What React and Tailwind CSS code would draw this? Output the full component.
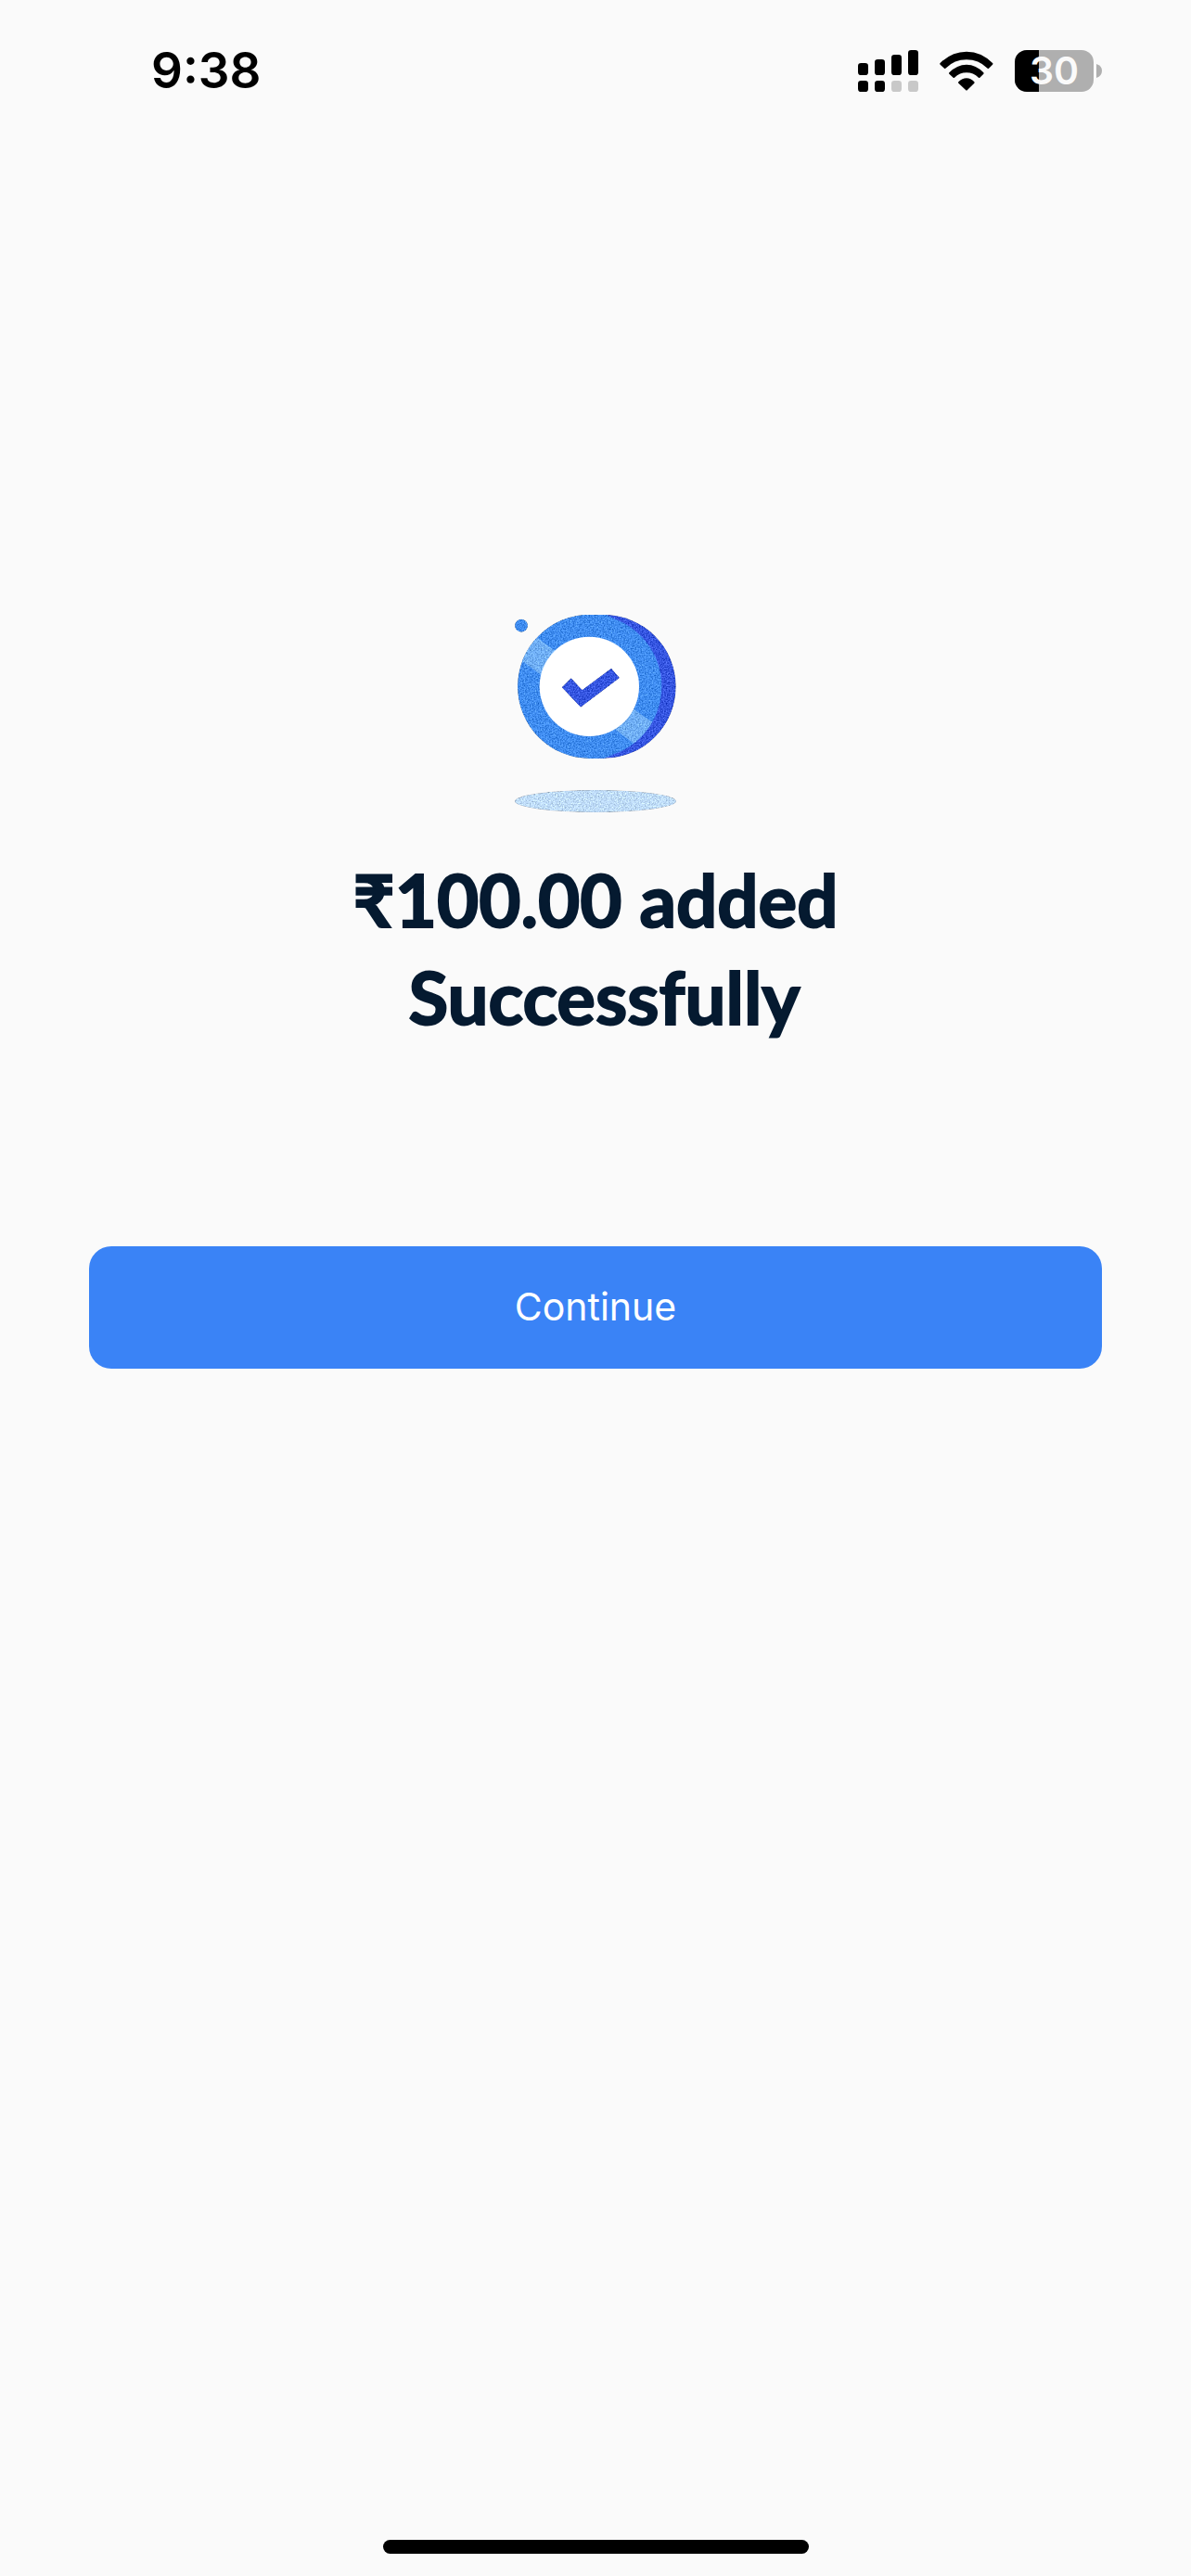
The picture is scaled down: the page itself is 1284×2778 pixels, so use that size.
function SignalIcon() {
  return (
    <svg className="h-[45px] w-[65px]" viewBox="75 69 195 135" aria-hidden="true">
      <rect x="75" y="111" width="33" height="39" rx="10" />
      <rect x="129" y="99" width="33" height="51" rx="10" />
      <rect x="183" y="84" width="33" height="66" rx="10" />
      <rect x="237" y="69" width="33" height="81" rx="10" />
      <rect x="75" y="168" width="33" height="36" rx="10" />
      <rect x="129" y="168" width="33" height="36" rx="10" />
      <rect x="183" y="168" width="33" height="36" rx="10" fill="#c8c8c8" />
      <rect x="237" y="168" width="33" height="36" rx="10" fill="#c8c8c8" />
    </svg>
  );
}

function WifiIcon() {
  return (
    <svg className="h-[45px] w-[58px]" viewBox="338 67 174 135" aria-hidden="true">
      <path d="M339 110Q376 72 425 72Q474 72 510 110Q511 112 509 114L497 126Q495 128 493 126Q464 98 425 98Q386 98 357 126Q355 128 353 126L340 114Q338 112 339 110Z" />
      <path d="M369 140Q394 114 425 114Q456 114 480 140Q482 142 480 144L468 156Q466 158 464 156Q447 140 425 140Q403 140 386 156Q384 158 382 156L369 144Q367 142 369 140Z" />
      <path d="M399 170Q411 158 425 158Q439 158 450 170Q452 172 450 174L427 197Q425 199 423 197L399 174Q397 172 399 170Z" />
    </svg>
  );
}

function Battery({ level }) {
  return (
    <div className="flex items-center gap-[3px]">
      <div className="relative flex h-[45px] w-[85px] items-center justify-center rounded-[13px] bg-[#afafaf]">
        <div
          className="absolute inset-y-0 left-0 rounded-l-[13px] bg-black"
          style={{ width: `${level}%` }}
        />
        <span className="relative text-[41px] leading-[45px] font-semibold text-[#fafafa]">
          {level}
        </span>
      </div>
      <svg className="h-[15px] w-[6px]" viewBox="0 0 6 15" aria-hidden="true">
        <path d="M0 0Q6 2 6 7Q6 13 0 15Z" fill="#afafaf" />
      </svg>
    </div>
  );
}

function StatusBar() {
  return (
    <header className="flex h-[152px] items-center justify-between pr-[96px] pl-[163px]">
      <time className="text-[53px] leading-[60px] font-semibold">9:38</time>
      <div className="flex items-center gap-[23px]">
        <SignalIcon />
        <WifiIcon />
        <Battery level={30} />
      </div>
    </header>
  );
}

function SuccessCoin() {
  return (
    <svg className="h-[213px] w-[174px]" viewBox="75 69 522 639" aria-hidden="true">
      <defs>
        <filter id="grain" x="0%" y="0%" width="100%" height="100%" colorInterpolationFilters="sRGB">
          <feTurbulence type="fractalNoise" baseFrequency="0.22" numOctaves="2" seed="4" result="noise" />
          <feColorMatrix
            in="noise"
            type="matrix"
            values="1 0 0 0 0  1 0 0 0 0  1 0 0 0 0  0 0 0 0 1"
            result="mono"
          />
          <feComposite in="SourceGraphic" in2="mono" operator="arithmetic" k2="1" k3="0.5" k4="-0.25" result="mixed" />
          <feComposite in="mixed" in2="SourceGraphic" operator="in" />
        </filter>
        <clipPath id="ring">
          <circle cx="317" cy="301" r="233" />
        </clipPath>
      </defs>
      <g filter="url(#grain)">
        <circle cx="96" cy="104" r="21" fill="#3f8cf0" />
        <path d="M317 69H364A232 232 0 0 1 364 533H317Z" fill="#3555e0" />
        <circle cx="317" cy="301" r="233" fill="#3f8cf0" />
        <path d="M317 69H372L400 84H317ZM317 533H364L392 522H317Z" fill="#3f8cf0" />
        <g clipPath="url(#ring)" fill="#70aff6">
          <path d="M80 100L148 144L490 396L540 430L480 500L400 440L80 205Z" />
        </g>
      </g>
      <circle cx="316" cy="301" r="161" fill="#ffffff" />
      <g filter="url(#grain)">
        <path d="M227 304L257 274L293 312L387 242L414 273L288 368Z" fill="#3555e0" />
        <ellipse cx="336" cy="672" rx="261" ry="36" fill="#bfdcf9" />
      </g>
    </svg>
  );
}

function App() {
  return (
    <div className="flex min-h-screen flex-col bg-[#fafafa] font-['Inter','Liberation_Sans',sans-serif] text-black">
      <StatusBar />
      <main className="flex flex-1 flex-col items-center px-24 pt-[511px]">
        <SuccessCoin />
        <h1 className="mt-[42px] text-center font-['Lato','Inter',sans-serif] text-[78px] leading-[105px] font-bold text-[#051a30] [-webkit-text-stroke:2px_#051a30]">
          ₹100.00 added
          <br />
          &nbsp;Successfully
        </h1>
        <button
          type="button"
          className="mt-[216px] h-[132px] w-full rounded-3xl bg-[#3a83f6] text-[41px] text-white"
        >
          Continue
        </button>
      </main>
      <footer className="flex justify-center pb-6">
        <div className="h-[15px] w-[459px] rounded-full bg-black" />
      </footer>
    </div>
  );
}

export default App;
